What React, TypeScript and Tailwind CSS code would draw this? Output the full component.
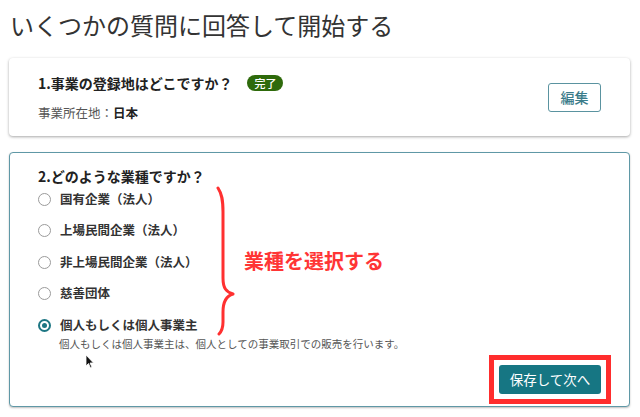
import React from "react";

const options = [
  { label: "国有企業（法人）", checked: false },
  { label: "上場民間企業（法人）", checked: false },
  { label: "非上場民間企業（法人）", checked: false },
  { label: "慈善団体", checked: false },
  { label: "個人もしくは個人事業主", checked: true },
];

function Radio({ checked }: { checked: boolean }) {
  return checked ? (
    <span className="w-[13px] h-[13px] rounded-full border-2 border-[#1d7683] bg-white flex items-center justify-center shrink-0">
      <span className="w-[5px] h-[5px] rounded-full bg-[#1d7683]" />
    </span>
  ) : (
    <span className="w-[13px] h-[13px] rounded-full border-[1.5px] border-[#9b9b9b] bg-white shrink-0" />
  );
}

export default function App() {
  return (
    <div
      className="w-[640px] h-[417px] bg-white overflow-hidden text-[#222]"
      style={{ fontFamily: '"Noto Sans CJK JP", "Noto Sans", sans-serif' }}
    >
      <h1 className="px-[10px] pt-[10px] text-[24px] leading-[30px] font-normal text-[#333]">
        いくつかの質問に回答して開始する
      </h1>

      {/* Question 1 (done) */}
      <div className="mt-[18px] ml-[9px] mr-[10px] h-[78px] rounded-[4px] bg-white shadow-[0_1px_3px_rgba(0,0,0,0.35)] pl-[29px] pr-[29px] flex items-center justify-between">
        <div className="flex flex-col">
          <div className="flex items-center h-[22px]">
            <span className="text-[14px] font-bold leading-[22px]">1.事業の登録地はどこですか？</span>
            <span className="ml-[15px] h-[16px] px-[7px] rounded-full bg-[#2e6a0b] text-white text-[11px] leading-[16px] font-medium">
              完了
            </span>
          </div>
          <div className="mt-[10px] text-[12.5px] leading-[18px] text-[#555]">
            事業所在地：<span className="font-bold text-[#222]">日本</span>
          </div>
        </div>
        <button className="w-[53px] h-[29px] rounded-[3px] border-[1.5px] border-[#5a93a0] text-[#3b7c8a] text-[14px] font-medium flex items-center justify-center">
          編集
        </button>
      </div>

      {/* Question 2 (active) */}
      <div className="relative mt-[16px] ml-[9px] mr-[10px] h-[255px] rounded-[4px] border border-[#5f98a6] bg-white shadow-[0_1px_2px_rgba(0,0,0,0.25)] pl-[28px] pr-[18px] pt-[13px] flex flex-col">
        <div className="text-[14px] font-bold leading-[20px]">2.どのような業種ですか？</div>
        <div className="mt-[1px] flex flex-col gap-[7.5px]">
          {options.map((o) => (
            <div key={o.label} className="flex items-center h-[24px]">
              <Radio checked={o.checked} />
              <span className="ml-[9px] text-[12.5px] font-bold text-[#333]">{o.label}</span>
            </div>
          ))}
        </div>
        <div className="pl-[21px] text-[10.5px] leading-[14px] text-[#555]">
          個人もしくは個人事業主は、個人としての事業取引での販売を行います。
        </div>
        <div className="mt-[4px] flex justify-end">
          <div className="border-[5px] border-[#ff2d2d] p-[5px]">
            <button className="w-[102px] h-[29px] rounded-[3px] bg-[#167683] text-white text-[13.5px] flex items-center justify-center">
              保存して次へ
            </button>
          </div>
        </div>

        {/* annotation brace */}
        <svg
          className="absolute left-[204px] top-[33px]"
          width="24"
          height="150"
          viewBox="0 0 24 150"
          fill="none"
        >
          <path
            d="M4 2 C8 8 9 14 9 26 L9 92 C9 102 12 106 19 108 C12 110 9 116 9 126 L9 136 C9 142 7 146 5 148"
            stroke="#ff3030"
            strokeWidth="3"
            strokeLinecap="round"
            strokeLinejoin="round"
          />
        </svg>
        <div className="absolute left-[234px] top-[96px] text-[20px] leading-[24px] font-bold text-[#ff3535]">
          業種を選択する
        </div>

        {/* mouse cursor */}
        <svg className="absolute left-[75px] top-[201px]" width="10" height="15" viewBox="0 0 10 15">
          <path d="M1 1 L1 12 L3.5 9.5 L5.5 14 L7 13.3 L5 9 L8.5 9 Z" fill="#111" stroke="#fff" strokeWidth="0.8" />
        </svg>
      </div>
    </div>
  );
}
